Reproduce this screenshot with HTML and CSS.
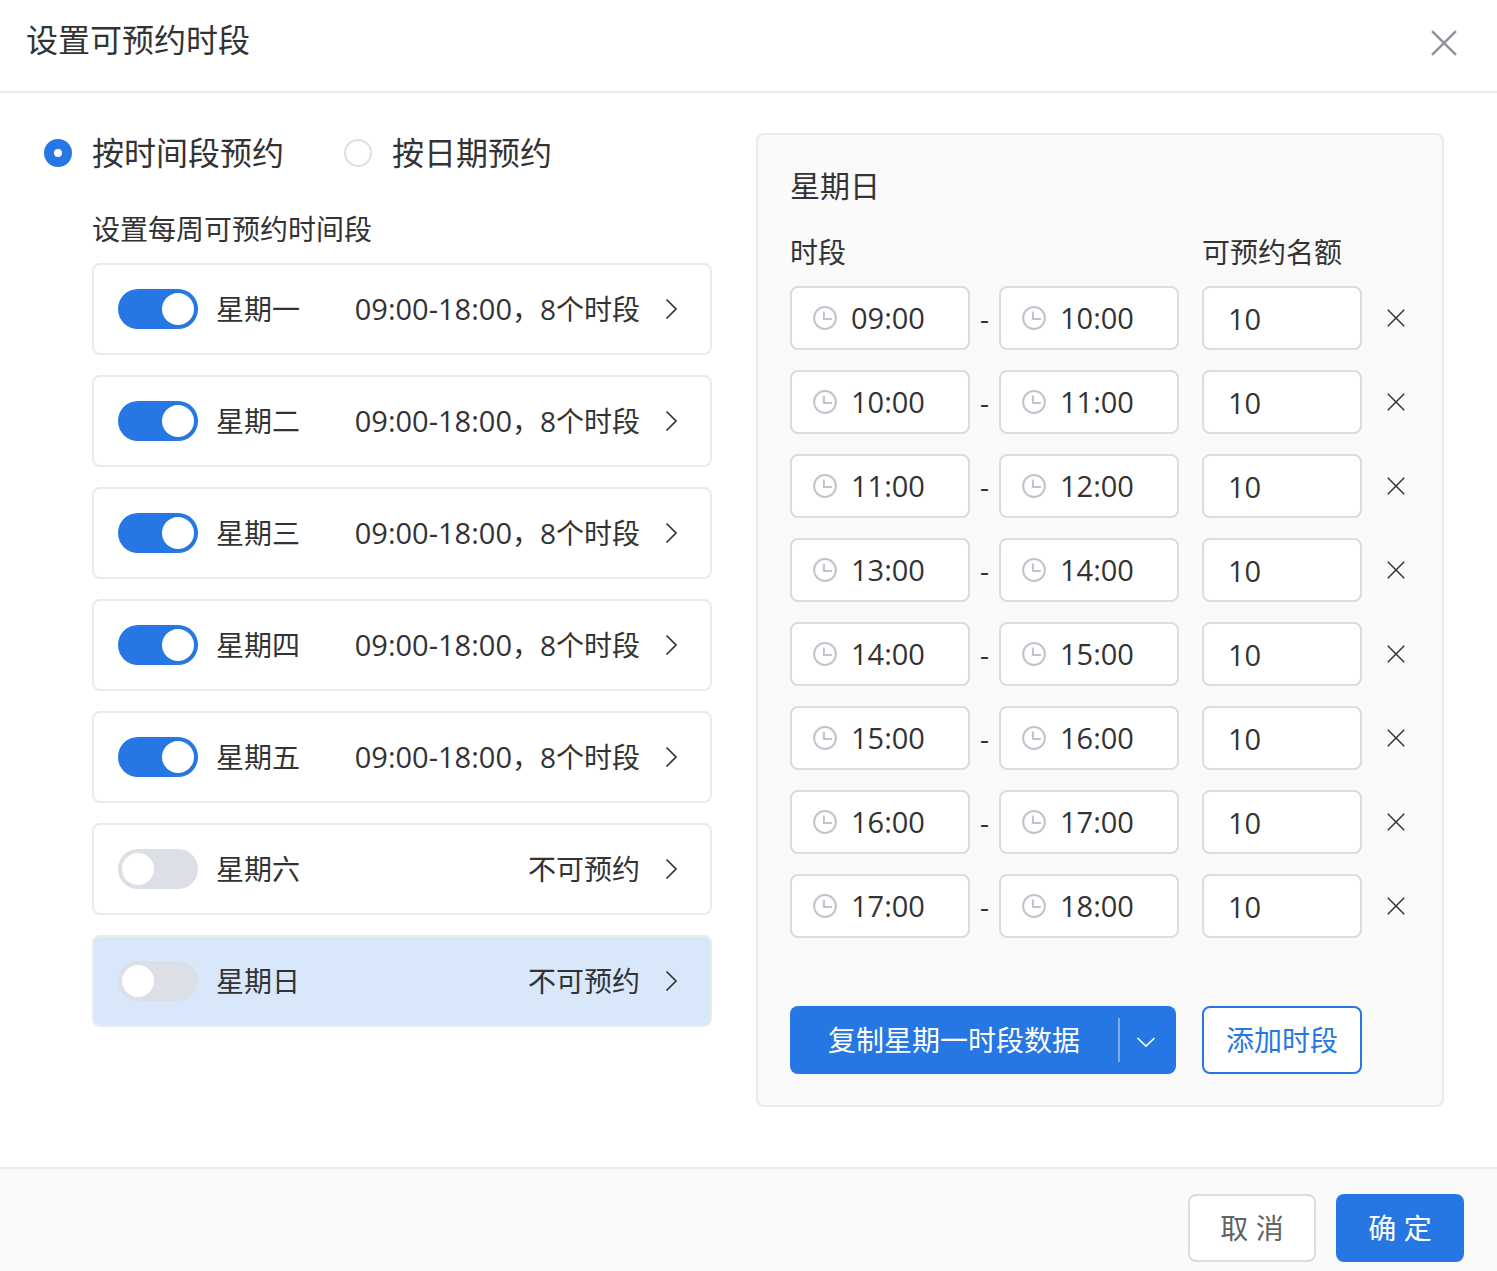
FILE: index.html
```
<!DOCTYPE html>
<html lang="zh-CN">

<head>
    <meta charset="UTF-8">
    <meta name="viewport" content="width=device-width, initial-scale=1.0">
    <title>设置可预约时段</title>
    <link rel="stylesheet" href="styles.css">
</head>

<body>
    <svg class="icon-defs" aria-hidden="true">
        <symbol id="icon-clock" viewBox="0 0 24 24">
            <circle cx="12" cy="12" r="10.9" />
            <path d="M10.900 5.500v7.500h8" />
        </symbol>
        <symbol id="icon-arrow" viewBox="0 0 28 28">
            <path d="M8.500 4.500l9.500 9.500-9.500 9.500" />
        </symbol>
        <symbol id="icon-close" viewBox="0 0 24 24">
            <path d="M1 1l22 22M23 1L1 23" />
        </symbol>
    </svg>

    <div class="dialog">
        <div class="dialog-header">
            <h1>设置可预约时段</h1>
            <button type="button" class="close-btn" aria-label="关闭">
                <svg><use href="#icon-close" /></svg>
            </button>
        </div>

        <div class="dialog-body">
            <div class="week">
                <div class="mode">
                    <label><input type="radio" name="mode" value="time" checked>按时间段预约</label>
                    <label><input type="radio" name="mode" value="date">按日期预约</label>
                </div>
                <h2>设置每周可预约时间段</h2>
                <div class="day-list" id="dayList"></div>
            </div>

            <div class="slot-panel">
                <h2>星期日</h2>
                <div class="slot-row slot-head">
                    <span class="head-time">时段</span>
                    <span>可预约名额</span>
                </div>
                <div class="slot-list" id="slotList"></div>
                <div class="slot-actions">
                    <div class="copy-group">
                        <button type="button" class="copy-btn">复制星期一时段数据</button>
                        <button type="button" class="copy-more" aria-label="选择星期">
                            <svg viewBox="0 0 20 12"><path d="M1.500 2l8.500 8 8.500-8" /></svg>
                        </button>
                    </div>
                    <button type="button" class="add-btn">添加时段</button>
                </div>
            </div>
        </div>

        <div class="dialog-footer">
            <button type="button" class="cancel-btn">取 消</button>
            <button type="button" class="ok-btn">确 定</button>
        </div>
    </div>

    <script src="script.js"></script>
</body>
</html>
```

FILE: styles.css
```
* {
    box-sizing: border-box;
}

body {
    margin: 0;
    background-color: #fff;
    color: #333;
    font-family: "Open Sans", "Noto Sans CJK SC", sans-serif;
    font-size: 28px;
    line-height: 40px;
}

h1,
h2 {
    margin: 0;
    font-weight: normal;
}

button,
input {
    margin: 0;
    font-family: inherit;
    font-size: inherit;
    line-height: inherit;
    color: inherit;
}

button {
    padding: 0;
    border: none;
    background: none;
    cursor: pointer;
}

svg {
    display: block;
    fill: none;
    stroke: currentColor;
    stroke-width: 2;
}

.icon-defs {
    display: none;
}

.dialog {
    min-height: 100vh;
    display: flex;
    flex-direction: column;
}

/* 标题栏 */
.dialog-header {
    display: flex;
    justify-content: space-between;
    align-items: flex-start;
    padding: 20px 40px 25px 26px;
    border-bottom: 2px solid #ebebeb;
}

.dialog-header h1 {
    font-size: 32px;
}

.close-btn {
    padding: 10px 0;
    color: #909399;
}

.close-btn svg {
    width: 26px;
    height: 26px;
    stroke-width: 2.4;
}

.dialog-body {
    flex: 1;
    display: grid;
    grid-template-columns: 1fr 688px;
    align-items: start;
    gap: 44px;
    padding: 40px 53px 60px 44px;
}

/* 左侧 */
.mode {
    display: flex;
    gap: 60px;
    font-size: 32px;
}

.mode label {
    display: flex;
    align-items: center;
    gap: 20px;
    cursor: pointer;
}

.mode input {
    appearance: none;
    width: 28px;
    height: 28px;
    border: 2px solid #dcdfe6;
    border-radius: 50%;
    background-color: #fff;
}

.mode input:checked {
    border: 10px solid #2676e3;
}

.week h2 {
    margin: 36px 0 14px 48px;
    font-size: 28px;
}

.day-list {
    display: flex;
    flex-direction: column;
    gap: 20px;
    margin-left: 48px;
}

.day {
    display: flex;
    align-items: center;
    height: 92px;
    padding: 0 24px;
    border: 2px solid #ebebeb;
    border-radius: 8px;
}

.day.active {
    background-color: #d8e7f9;
}

.day label {
    display: flex;
    align-items: center;
    gap: 18px;
}

.switch {
    appearance: none;
    display: flex;
    width: 80px;
    height: 40px;
    padding: 4px;
    border-radius: 20px;
    background-color: #dcdfe6;
    cursor: pointer;
}

.switch::before {
    content: "";
    width: 32px;
    height: 32px;
    border-radius: 50%;
    background-color: #fff;
}

.switch:checked {
    justify-content: flex-end;
    background-color: #2676e3;
}

.day-detail {
    display: flex;
    align-items: center;
    gap: 18px;
    margin-left: auto;
}

.day-detail svg {
    width: 28px;
    height: 28px;
    stroke-width: 1.7;
}

.range {
    font-size: 29px;
}

/* 右侧 */
.slot-panel {
    padding: 31px 32px;
    border: 2px solid #ebebeb;
    border-radius: 8px;
    background-color: #fafafa;
}

.slot-panel h2 {
    margin-bottom: 26px;
    font-size: 30px;
}

.slot-row {
    display: flex;
    align-items: center;
}

.slot-head {
    margin-bottom: 14px;
}

.head-time {
    width: 412px;
}

.slot-list {
    display: flex;
    flex-direction: column;
    gap: 20px;
}

.time-box,
.quota {
    height: 64px;
    border: 2px solid #dcdcdc;
    border-radius: 8px;
    background-color: #fff;
    font-size: 29px;
}

.time-box {
    display: flex;
    align-items: center;
    gap: 14px;
    width: 180px;
    padding-left: 21px;
}

.time-box svg {
    flex: none;
    width: 24px;
    height: 24px;
    color: #c0c4cc;
}

.time-box input {
    width: 100px;
    padding: 0;
    border: none;
    outline: none;
    background: none;
}

.dash {
    width: 29px;
    text-align: center;
}

.quota {
    width: 160px;
    margin-left: 23px;
    padding: 0 24px;
    outline: none;
}

.remove-btn {
    margin-left: 25px;
}

.remove-btn svg {
    width: 18px;
    height: 18px;
}

.slot-actions {
    display: flex;
    gap: 26px;
    margin-top: 68px;
}

.copy-group {
    display: flex;
    align-items: center;
    width: 386px;
    height: 68px;
    border-radius: 8px;
    background-color: #2676e3;
    color: #fff;
}

.copy-btn {
    flex: 1;
    height: 44px;
    border-right: 2px solid #7dacee;
}

.copy-more {
    display: flex;
    align-items: center;
    width: 56px;
    height: 68px;
    padding: 4px 0 0 16px;
}

.copy-more svg {
    width: 20px;
    height: 12px;
    stroke-width: 1.7;
}

.add-btn {
    width: 160px;
    height: 68px;
    border: 2px solid #2676e3;
    border-radius: 8px;
    background-color: #fff;
    color: #2676e3;
}

/* 底部按钮 */
.dialog-footer {
    display: flex;
    justify-content: flex-end;
    gap: 20px;
    padding: 25px 33px 9px;
    border-top: 2px solid #ebebeb;
    background-color: #fafafa;
}

.dialog-footer button {
    width: 128px;
    height: 68px;
    border-radius: 8px;
}

.dialog-footer .cancel-btn {
    border: 2px solid #dcdcdc;
    background-color: #fff;
    color: #606266;
}

.dialog-footer .ok-btn {
    background-color: #2676e3;
    color: #fff;
}
```

FILE: script.js
```
const days = [
    { name: '星期一', open: true },
    { name: '星期二', open: true },
    { name: '星期三', open: true },
    { name: '星期四', open: true },
    { name: '星期五', open: true },
    { name: '星期六', open: false },
    { name: '星期日', open: false, active: true }
];

const slots = [
    ['09:00', '10:00'],
    ['10:00', '11:00'],
    ['11:00', '12:00'],
    ['13:00', '14:00'],
    ['14:00', '15:00'],
    ['15:00', '16:00'],
    ['16:00', '17:00'],
    ['17:00', '18:00']
];

// 每周列表
document.getElementById('dayList').innerHTML = days.map(day => `
    <div class="day${day.active ? ' active' : ''}">
        <label><input type="checkbox" class="switch" ${day.open ? 'checked' : ''}>${day.name}</label>
        <button type="button" class="day-detail">
            <span>${day.open ? '<span class="range">09:00-18:00</span>，8个时段' : '不可预约'}</span>
            <svg><use href="#icon-arrow" /></svg>
        </button>
    </div>
`).join('');

function timeBox(value, label) {
    return `
        <label class="time-box">
            <svg><use href="#icon-clock" /></svg>
            <input type="text" value="${value}" aria-label="${label}">
        </label>`;
}

// 时段列表
document.getElementById('slotList').innerHTML = slots.map(([start, end]) => `
    <div class="slot-row">
        ${timeBox(start, '开始时间')}
        <span class="dash">-</span>
        ${timeBox(end, '结束时间')}
        <input type="text" class="quota" value="10" aria-label="可预约名额">
        <button type="button" class="remove-btn" aria-label="删除时段">
            <svg><use href="#icon-close" /></svg>
        </button>
    </div>
`).join('');
```
